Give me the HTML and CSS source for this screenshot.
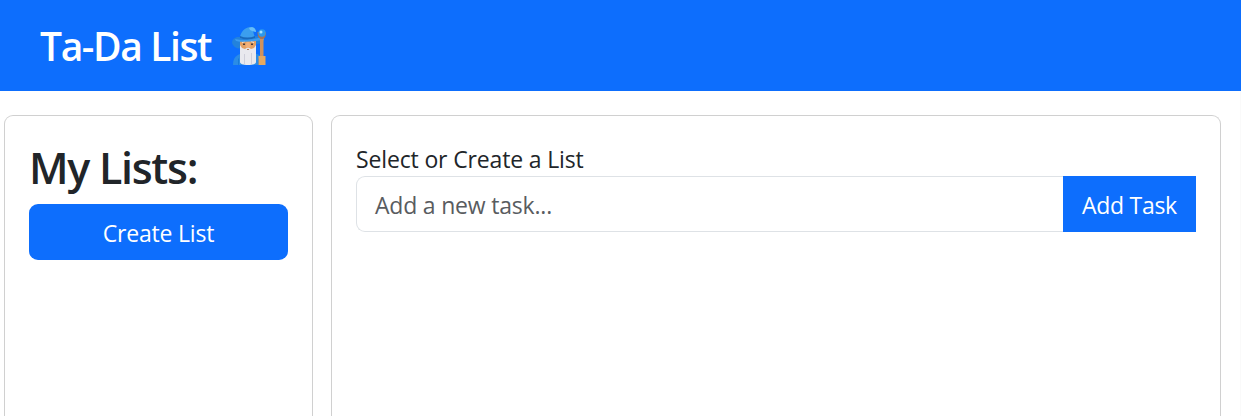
FILE: index.html
```html
<!DOCTYPE html>
<html lang="en">
<head>
<meta charset="utf-8">
<title>Ta-Da List</title>
<link rel="stylesheet" href="styles.css">
</head>
<body>
<header class="navbar">
  <h1 class="brand"><span class="brand-name">Ta-Da List</span></h1>
  <svg class="wizard" viewBox="0 0 36 38" aria-hidden="true">
    <path fill="#2b8ce6" d="M1 38c0-6 2-9 7-11h17c4 1 5 5 5 11z"/>
    <path fill="#1a7bd8" d="M6 38v-6l1-1v7zM26 38v-6l1-1v7z"/>
    <path fill="#2382dc" d="M1 18c-2-3-1-6 4-8l22-1c4 0 6 2 5 5-1 2-4 3-7 3L10 21c-4 1-7 0-9-3z"/>
    <path fill="#e3a063" d="M8 13h16v8l-3 6H11l-3-6z"/>
    <path fill="#e9e9ee" d="M8 18l2 3 3 1 3-2 3 2 3-1 2-3v17c0 2-3 3-8 3s-8-1-8-3z"/>
    <path fill="#cfcfda" d="M12 27h1v10h-1zM19 26h1v11h-1z"/>
    <path fill="#f2b17a" d="M14.500 15h3l1 5-2.500 1-2.500-1z"/>
    <path fill="#4a3b3d" d="M11 16.500h2v1.500h-2zM19 16.500h2v1.500h-2z"/>
    <path fill="#f3e3d2" d="M10 15l3-1v1l-3 1zM19 14l3 1v1l-3-1z"/>
    <path fill="#b77b55" d="M15 22h2v1h-2z"/>
    <path fill="#3b9eee" d="M8 10C9 5 12 1 18 0c4-.5 6 2 6 5l-3-1 2 7c-5 2-10 2-15 0z"/>
    <path fill="#67bdf8" d="M17 1c4-2 7 1 7 4l-4-1-2-1z"/>
    <path fill="#1869bd" d="M8 9c5 2 10 2 15 0v2c-5 2-10 2-15 0z"/>
    <path fill="#3d9cf0" d="M3 12c8 2 18 1 26-2 2 0 3 1 3 3-9 1-20 3-28 1z"/>
    <path fill="#cf925e" d="M28 10h3.500v22H28z"/>
    <path fill="#a87354" d="M25.500 5H27c0 3 1 4 2.500 4S32 8 32 5h2c0 4-1 6-3 7h-2.500c-2-1-3-3-3-7z"/>
    <circle cx="30" cy="6" r="3.700" fill="#2b99ee"/>
    <circle cx="29" cy="5" r="1.500" fill="#a5e3ff"/>
    <path fill="#e6a95f" d="M26.500 29h7v9h-7z"/>
  </svg>
</header>
<main class="layout">
  <section class="card lists">
    <h2 class="heading"><span class="heading-text">My Lists:</span></h2>
    <button class="btn create"><span class="create-text">Create List</span></button>
  </section>
  <section class="card tasks">
    <p class="prompt"><span class="prompt-text">Select or Create a List</span></p>
    <div class="input-group">
      <div class="field"><span class="placeholder">Add a new task...</span></div>
      <button class="btn add"><span class="add-text">Add Task</span></button>
    </div>
  </section>
</main>
</body>
</html>
```
FILE: styles.css
```css
* { box-sizing: border-box; }
body {
  margin: 0;
  height: 416px;
  overflow: hidden;
  background: #fff;
  color: #212529;
  font: 23px/36px "Open Sans", "Noto Sans", sans-serif;
}
h1, h2, p { margin: 0; }
.navbar {
  display: flex;
  align-items: center;
  height: 91px;
  padding-left: 40px;
  background: #0d6efd;
  color: #fff;
}
.brand {
  width: 192px;
  font-size: 39px;
  line-height: 58px;
  font-weight: 600;
  white-space: nowrap;
}
.brand-name { letter-spacing: -1.4px; }
.wizard { width: 36px; height: 38px; margin-top: 1px; }
.layout {
  display: grid;
  grid-template-columns: 309px 890px;
  column-gap: 18px;
  height: 325px;
  padding: 24px 0 0 4px;
  border-right: 1px solid #fafafa;
}
.card {
  padding: 24px;
  border: 1px solid #d0d0d0;
  border-bottom: 0;
  border-radius: 9px 9px 0 0;
}
.heading {
  height: 64px;
  font-size: 43px;
  line-height: 55px;
  font-weight: 600;
  white-space: nowrap;
}
.heading-text { letter-spacing: -1.3px; }
.btn {
  display: block;
  height: 56px;
  padding: 1px 0 0;
  border: 0;
  background: #0d6efd;
  color: #fff;
  font: inherit;
  white-space: nowrap;
}
.create { width: 259px; border-radius: 9px; }
.create-text { letter-spacing: -0.2px; }
.prompt { height: 36px; padding-top: 1px; white-space: nowrap; }
.prompt-text { letter-spacing: -0.15px; }
.input-group { display: flex; }
.field {
  flex: 1;
  height: 56px;
  padding: 10px 18px 0;
  border: 1px solid #dee2e6;
  border-right: 0;
  border-radius: 9px 0 0 9px;
  color: #595c5f;
}
.placeholder { letter-spacing: -0.2px; }
.add { width: 133px; }
.add-text { letter-spacing: -0.3px; }
```
